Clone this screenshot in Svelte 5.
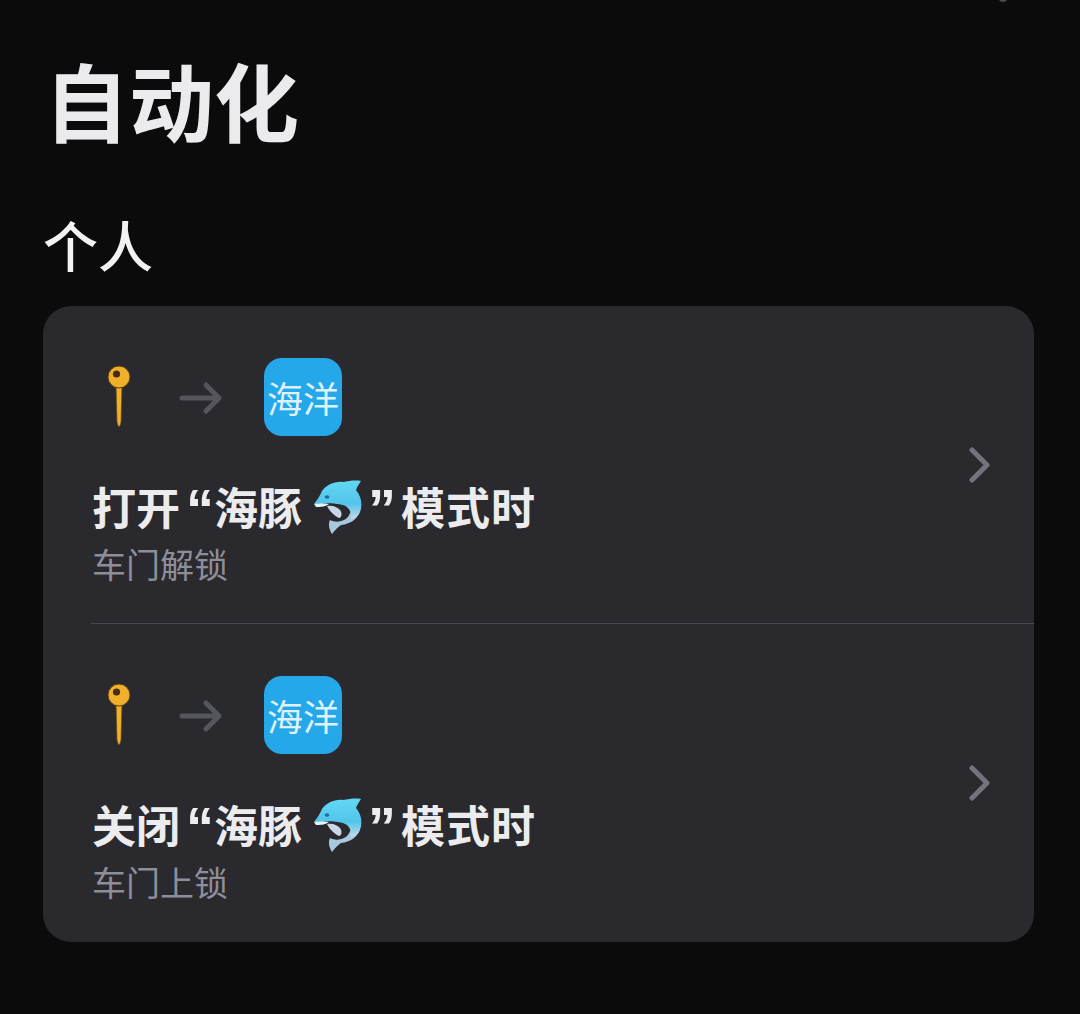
<script>
  const rows = [
    { title: '打开', sub: '车门解锁' },
    { title: '关闭', sub: '车门上锁' }
  ];
</script>

<main class="page">
  <span class="speck"></span>
  <h1>自动化</h1>
  <h2>个人</h2>
  <section class="card">
    {#each rows as row}
      <div class="row">
        <div class="info">
          <div class="icons">
            <svg class="key" viewBox="0 0 24 64" width="24" height="64">
              <path d="M9 20 L10 57 Q12 66 14 57 L15 20 Z" fill="#efb02c" stroke="#6b4a10" stroke-width="0.7" />
              <circle cx="12" cy="12" r="11" fill="#efb02c" stroke="#5a3d0e" stroke-width="1" />
              <circle cx="9.5" cy="9" r="3.6" fill="#4a2a10" />
            </svg>
            <svg class="arrow" viewBox="0 0 44 36" width="44" height="36">
              <path d="M3 18 H40 M27 5 L40 18 L27 31" fill="none" stroke="#55555c" stroke-width="5" stroke-linecap="round" stroke-linejoin="round" />
            </svg>
            <div class="tile">海洋</div>
          </div>
          <div class="title">
            <span>{row.title}</span>
            <span class="quote open">“</span>
            <span>海豚</span>
            <svg class="dolphin" viewBox="0 0 50 54" width="50" height="54">
              <defs>
                <linearGradient id="dolphinBody" x1="0" y1="0" x2="0" y2="1">
                  <stop offset="0" stop-color="#62d8f4" />
                  <stop offset="0.6" stop-color="#52c4ea" />
                  <stop offset="1" stop-color="#c6dcec" />
                </linearGradient>
              </defs>
              <path d="M47 30 C46 38 38 44 28 45 C25 47 22 50 19 54 C16 49 15 44 17 40 C21 42 25 42 28 41 C33 40 37 36 38 30 Z" fill="#a9c8dc" />
              <path d="M1 24 C4 20 7 16 9 11 C13 5 22 1 30 2 C36 1 42 0 48 1 C46 4 44 7 43 10 C48 16 50 24 47 32 C45 36 43 38 38 39 C39 32 36 27 30 25 C22 23 12 23 1 24 Z" fill="url(#dolphinBody)" />
              <path d="M1 24 C6 23 11 23 16 24 C12 27 7 27 3 27 Z" fill="#e2f5fb" />
              <path d="M14 26 C20 25 24 27 27 30 C30 34 28 38 26 38 C22 36 17 32 14 26 Z" fill="#c8d6e6" />
              <ellipse cx="14" cy="17" rx="2.4" ry="1.8" fill="#1c6f9c" />
            </svg>
            <span class="quote close">”</span>
            <span class="tail">模式时</span>
          </div>
          <div class="sub">{row.sub}</div>
        </div>
        <svg class="chevron" viewBox="0 0 22 36" width="22" height="36">
          <path d="M3 3 L18 18 L3 33" fill="none" stroke="#73737e" stroke-width="5" stroke-linecap="round" stroke-linejoin="round" />
        </svg>
      </div>
    {/each}
  </section>
</main>

<style>
  :global(body) {
    margin: 0;
    background: #0b0b0c;
  }

  .page {
    position: relative;
    box-sizing: border-box;
    width: 1080px;
    height: 1014px;
    padding: 47px 46px 0 43px;
    overflow: hidden;
    background: #0b0b0c;
    color: #ebebee;
    font-family: "Liberation Sans", "Noto Sans CJK SC", sans-serif;
  }

  .speck {
    position: absolute;
    top: -4px;
    left: 999px;
    width: 8px;
    height: 6px;
    border-radius: 50%;
    background: #4a4a4c;
  }

  h1 {
    margin: 0 0 0 1px;
    font-size: 85px;
    line-height: 120px;
    font-weight: 700;
  }

  h2 {
    margin: 43px 0 0 0;
    font-size: 55px;
    line-height: 76px;
    font-weight: 500;
    color: #f2f2f4;
  }

  .card {
    margin-top: 20px;
    height: 636px;
    border-radius: 28px;
    background: #29292e;
  }

  .row {
    display: flex;
    align-items: center;
    justify-content: space-between;
    box-sizing: border-box;
    height: 318px;
    margin-left: 48px;
    padding-right: 43px;
  }

  .row:first-child {
    border-bottom: 1px solid #47474d;
  }

  .info {
    display: flex;
    flex-direction: column;
    align-self: flex-start;
    margin-left: 1px;
    padding-top: 52px;
  }

  .icons {
    display: flex;
    align-items: center;
    height: 78px;
  }

  .key {
    margin-left: 15px;
    margin-top: -1px;
  }

  .arrow {
    margin-left: 48px;
    margin-top: 2px;
  }

  .tile {
    display: flex;
    align-items: center;
    justify-content: center;
    width: 78px;
    height: 78px;
    margin-left: 41px;
    border-radius: 18px;
    background: #25a8ea;
    color: #dff2fb;
    font-size: 36px;
    font-weight: 400;
  }

  .title {
    display: flex;
    align-items: center;
    margin-top: 40px;
    height: 60px;
    font-size: 44px;
    font-weight: 600;
    color: #ececef;
  }

  .quote {
    font-size: 56px;
    font-weight: 700;
    line-height: 60px;
    margin-top: 6px;
  }

  .quote.open {
    margin-left: 6px;
  }

  .quote.close {
    margin-left: 5px;
    margin-right: 5px;
  }

  .tail {
    letter-spacing: 1px;
  }

  .dolphin {
    margin-left: 11px;
    margin-top: 2px;
  }

  .sub {
    margin-top: 7px;
    font-size: 34px;
    line-height: 46px;
    color: #8e8e9a;
  }

  .chevron {
    flex: none;
  }
</style>
